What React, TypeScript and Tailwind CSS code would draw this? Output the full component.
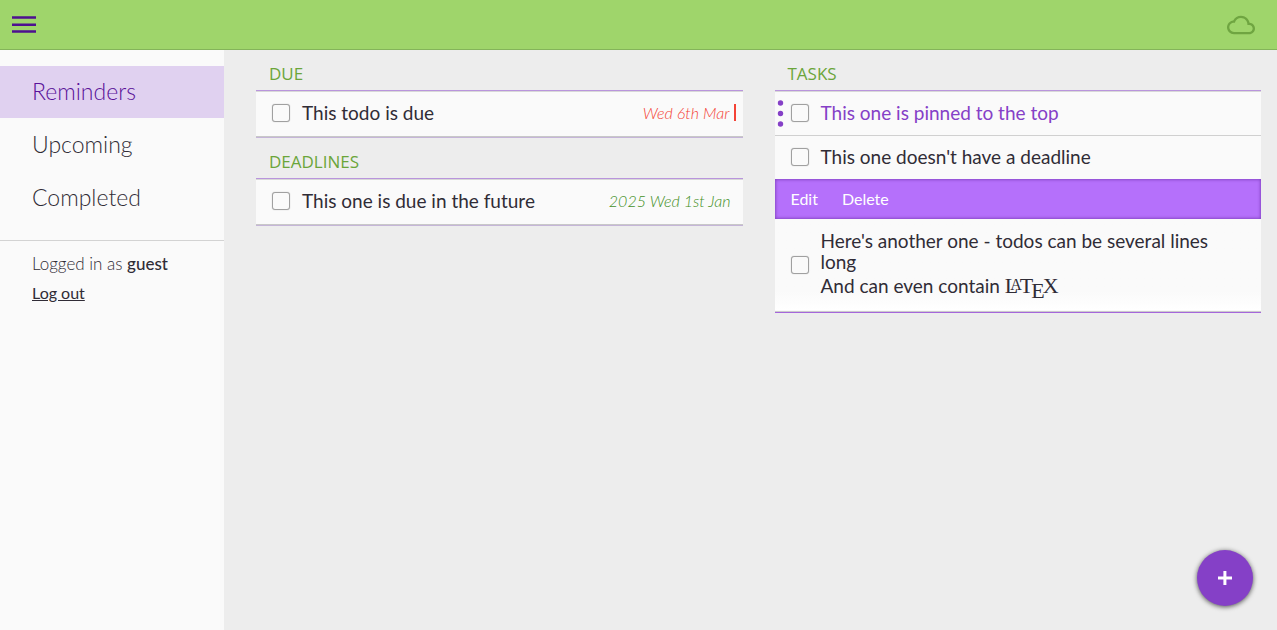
import React from "react";

type TodoProps = {
  id: string;
  children: React.ReactNode;
  pinned?: boolean;
  date?: string;
  overdue?: boolean;
};

function Todo({ id, children, pinned, date, overdue }: TodoProps) {
  return (
    <div className="relative flex min-h-[43px] items-center gap-3 px-4 pt-[7px] pb-[9px]">
      {pinned && (
        <svg className="absolute top-2 left-0 h-8 w-3 fill-[#8540c7]" viewBox="0 0 12 32" aria-hidden="true">
          <circle cx="5.5" cy="3" r="2.7" />
          <circle cx="5.5" cy="13.5" r="2.7" />
          <circle cx="5.5" cy="24" r="2.7" />
        </svg>
      )}
      <input
        id={id}
        type="checkbox"
        className="size-[18px] shrink-0 appearance-none rounded-[3px] border border-[#a0a0a0] bg-[#fafafa] shadow-[0_0_1px_#aaaaaa]"
      />
      <label
        htmlFor={id}
        className={pinned ? "flex-1 text-[19px] leading-[21px] text-[#8540c7]" : "flex-1 text-[19px] leading-[21px] text-[#302c36]"}
      >
        {children}
      </label>
      {date && (
        <time
          className={
            overdue
              ? "-mr-[9px] border-r-2 border-[#f44336] pr-1 text-base leading-[17px] font-light text-[#f44336] italic"
              : "-mr-1 text-base leading-[17px] font-light text-[#43901f] italic"
          }
        >
          {date}
        </time>
      )}
    </div>
  );
}

function Section({ title, active, children }: { title: string; active?: boolean; children: React.ReactNode }) {
  return (
    <section>
      <h2 className="px-[13px] pt-3 pb-1 font-['Open_Sans',sans-serif] text-[17px] leading-6 text-[#6ba53a]">{title}</h2>
      <div
        className={
          active
            ? "border-y border-t-[#b995dc] border-b-[#a566dc] bg-[#fafafa] pt-px pb-0.5 shadow-[inset_0_1px_0_#d8d8d8,inset_0_-1px_0_#cccccc]"
            : "border-y border-t-[#b995dc] border-b-[#c5b5d8] bg-[#fafafa] pt-px pb-0.5 shadow-[inset_0_1px_0_#d8d8d8,inset_0_-1px_0_#c8c8c8]"
        }
      >
        {children}
      </div>
    </section>
  );
}

export default function App() {
  return (
    <div className="flex min-h-screen flex-col bg-[#ededed] font-['Lato',sans-serif] text-[#302c36]">
      <header className="flex h-[50px] items-center justify-between border-b border-[#84b45a] bg-[#9fd56b] pr-[22px] pl-3">
        <button type="button" aria-label="Menu">
          <svg width="24" height="18" viewBox="0 0 24 18" className="fill-[#4d1090]">
            <path d="M0 .3h24v2.4H0zM0 7.5h24v2.4H0zM0 14.3h24v2.4H0z" />
          </svg>
        </button>
        <svg width="28" height="28" viewBox="0 0 24 24" className="fill-[#6fa541]" aria-hidden="true">
          <path d="M19.35 10.04C18.67 6.59 15.64 4 12 4 9.11 4 6.6 5.64 5.35 8.04 2.34 8.36 0 10.91 0 14c0 3.31 2.69 6 6 6h13c2.76 0 5-2.24 5-5 0-2.64-2.05-4.78-4.65-4.96zM19 18H6c-2.21 0-4-1.79-4-4s1.79-4 4-4h.71C7.37 7.69 9.48 6 12 6c3.04 0 5.5 2.46 5.5 5.5v.5H19c1.66 0 3 1.34 3 3s-1.34 3-3 3z" />
        </svg>
      </header>
      <div className="flex flex-1">
        <aside className="w-56 shrink-0 bg-[#fafafa] pt-4">
          <nav className="flex flex-col gap-px text-[23px] leading-[50px] font-light">
            <a href="#reminders" className="bg-[#e0d1f0] px-8 pb-0.5 text-[#5a1199]">Reminders</a>
            <a href="#upcoming" className="px-8 pb-0.5">Upcoming</a>
            <a href="#completed" className="px-8 pb-0.5">Completed</a>
          </nav>
          <div className="mt-4 border-t border-[#d3d3d3] px-8 pt-3">
            <p className="text-[17px] leading-[22px] font-light">
              Logged in as <span className="font-medium">guest</span>
            </p>
            <button type="button" className="mt-2 text-base leading-5 underline">Log out</button>
          </div>
        </aside>
        <main className="grid flex-1 grid-cols-2 gap-8 pr-4 pl-8">
          <div>
            <Section title="DUE">
              <Todo id="due" date="Wed 6th Mar" overdue>This todo is due</Todo>
            </Section>
            <Section title="DEADLINES">
              <Todo id="future" date="2025 Wed 1st Jan">This one is due in the future</Todo>
            </Section>
          </div>
          <div>
            <Section title="TASKS" active>
              <Todo id="pinned" pinned>This one is pinned to the top</Todo>
              <div className="border-t border-[#d0d0d0]">
                <Todo id="no-deadline">This one doesn't have a deadline</Todo>
              </div>
              <div className="flex h-10 items-center gap-6 bg-[#b570fb] px-4 text-base text-white shadow-[inset_0_0_3px_1px_#8848c8]">
                <button type="button">Edit</button>
                <button type="button">Delete</button>
              </div>
              <div className="bg-linear-to-t from-white to-[#fafafa] to-20% pt-1 pb-px">
                <Todo id="latex">
                  Here's another one - todos can be several lines long
                  <br />
                  And can even contain{" "}
                  <span className="inline-block font-['Liberation_Serif',serif] text-[22px] leading-7 whitespace-nowrap">
                    L<span className="-ml-2 align-[3px] text-base leading-none">A</span>
                    <span className="-ml-0.5">T</span>
                    <span className="-ml-0.5 align-[-5px] leading-[14px]">E</span>
                    <span className="-ml-0.5">X</span>
                  </span>
                </Todo>
              </div>
            </Section>
          </div>
        </main>
      </div>
      <button
        type="button"
        aria-label="Add todo"
        className="fixed right-6 bottom-6 flex size-14 items-center justify-center rounded-full bg-[#8540c7] shadow-[0_1px_5px_#000000aa]"
      >
        <svg width="14" height="14" viewBox="0 0 14 14" className="fill-white" aria-hidden="true">
          <path d="M5.4 0h3v5.4H14v3H8.4V14h-3V8.4H0v-3h5.4z" />
        </svg>
      </button>
    </div>
  );
}
